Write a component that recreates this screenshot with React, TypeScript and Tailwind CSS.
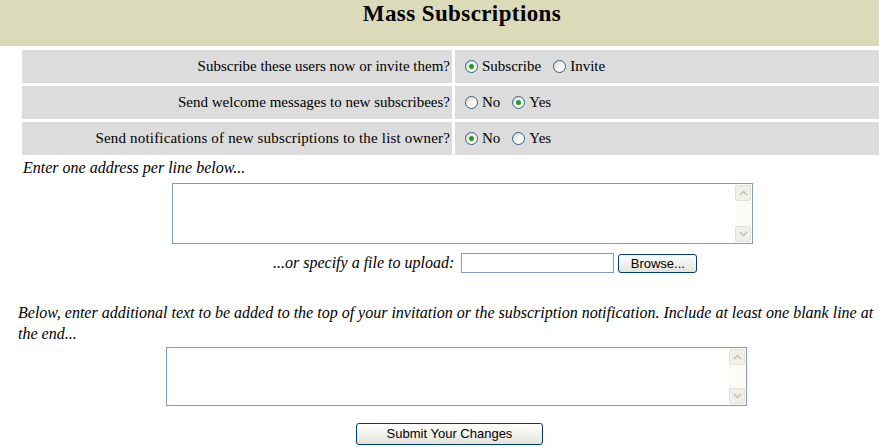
import React from 'react';

const serif = { fontFamily: '"Liberation Serif", "Times New Roman", serif' };
const sans = { fontFamily: '"Liberation Sans", Arial, sans-serif' };

function Radio({ checked }: { checked?: boolean }) {
  return (
    <span className="relative inline-flex h-[13px] w-[13px] shrink-0 items-center justify-center rounded-full border border-[#2f5f8f] bg-gradient-to-br from-[#d8d8d0] via-[#f4f4ee] to-white">
      {checked && <span className="h-[5px] w-[5px] rounded-full bg-[#21a121]" />}
    </span>
  );
}

function Option({ label, checked }: { label: string; checked?: boolean }) {
  return (
    <label className="inline-flex items-center gap-[4px]">
      <Radio checked={checked} />
      <span>{label}</span>
    </label>
  );
}

function Arrow({ up }: { up?: boolean }) {
  return (
    <div className="flex h-[16px] items-center justify-center rounded-[2px] border border-[#e2e1d6] bg-[#f1f0e8]">
      <svg width="9" height="6" viewBox="0 0 9 6">
        <polyline
          points={up ? '1,5 4.5,1.5 8,5' : '1,1 4.5,4.5 8,1'}
          fill="none"
          stroke="#c4c3ba"
          strokeWidth="1.6"
        />
      </svg>
    </div>
  );
}

function ScrollArea({ width, height }: { width: number; height: number }) {
  return (
    <div className="flex border border-[#7f9db9] bg-white" style={{ width, height }}>
      <div className="flex-1" />
      <div className="flex w-[17px] flex-col justify-between bg-[#fcfcf7] py-px pr-px">
        <Arrow up />
        <Arrow />
      </div>
    </div>
  );
}

const rows = [
  { q: 'Subscribe these users now or invite them?', a: [['Subscribe', true], ['Invite', false]], wide: false },
  { q: 'Send welcome messages to new subscribees?', a: [['No', false], ['Yes', true]], wide: false },
  { q: 'Send notifications of new subscriptions to the list owner?', a: [['No', true], ['Yes', false]], wide: true },
] as const;

export default function App() {
  return (
    <div className="w-[879px] h-[447px] overflow-hidden bg-white text-black" style={serif}>
      <div className="w-[924px]">
        {/* header */}
        <div className="flex h-[46px] justify-center bg-[#dcdbb9]">
          <h1 className="text-[23px] font-bold leading-[27px] tracking-[0.4px]">Mass Subscriptions</h1>
        </div>

        {/* options table */}
        <div className="ml-[22px] mt-[4px] flex w-[880px] flex-col gap-[3px] text-[15px]">
          {rows.map((r) => (
            <div key={r.q} className="flex h-[33px] gap-[3px]">
              <div
                className={`flex w-[430px] items-center justify-end bg-[#dcdcdc] pr-[2px] ${r.wide ? 'tracking-[0.18px]' : ''}`}
              >
                {r.q}
              </div>
              <div className="flex flex-1 items-center gap-[12px] bg-[#dcdcdc] pl-[10px]">
                {r.a.map(([l, c]) => (
                  <Option key={l} label={l} checked={c} />
                ))}
              </div>
            </div>
          ))}
        </div>

        <p className="ml-[23px] mt-[4px] text-[16px] italic leading-[18px]">Enter one address per line below...</p>
        <div className="mt-[6px] ml-[172px]">
          <ScrollArea width={581} height={61} />
        </div>

        <div className="mt-[9px] flex h-[20px] items-center text-[16px] italic">
          <span className="ml-[273px]">...or specify a file to upload:</span>
          <div className="ml-[7px] h-[20px] w-[153px] border border-[#7f9db9] bg-white" />
          <button
            className="ml-[4px] h-[19px] w-[79px] rounded-[3px] border border-[#003c74] bg-gradient-to-b from-white to-[#e4e3da] text-[13px] not-italic leading-none text-black"
            style={sans}
          >
            Browse...
          </button>
        </div>

        <p className="ml-[18px] mt-[29px] text-[16px] italic leading-[21px]">
          Below, enter additional text to be added to the top of your invitation or the subscription notification. Include at least one blank line at
          <br />
          the end...
        </p>
        <div className="mt-[3px] ml-[166px]">
          <ScrollArea width={581} height={59} />
        </div>

        <div className="mt-[15px] ml-[356px]">
          <button
            className="h-[22px] w-[187px] rounded-[3px] border border-[#003c74] bg-gradient-to-b from-white to-[#e4e3da] pb-px text-[13px] leading-none text-black"
            style={sans}
          >
            Submit Your Changes
          </button>
        </div>
      </div>
    </div>
  );
}
